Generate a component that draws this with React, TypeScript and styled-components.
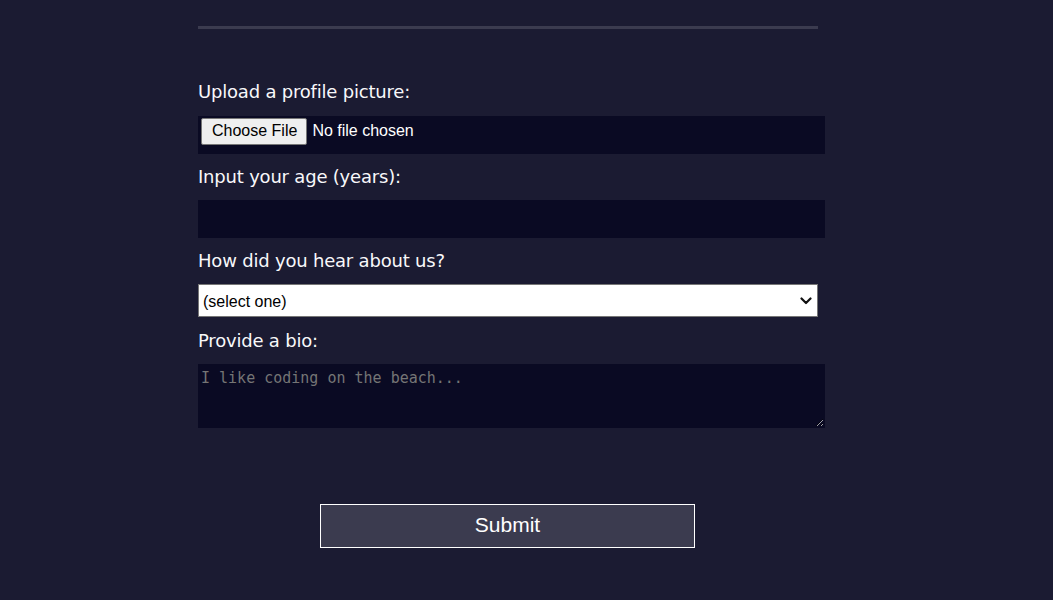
import React from "react";
import styled, { createGlobalStyle } from "styled-components";

const Global = createGlobalStyle`
  html, body {
    margin: 0;
    padding: 0;
    background: #1b1b32;
  }
  body {
    color: #f5f6f7;
    font-family: "DejaVu Sans", Verdana, sans-serif;
  }
`;

const Page = styled.main`
  min-height: 600px;
  box-sizing: border-box;
  padding: 26px 0 40px 198px;
`;

const Form = styled.form`
  width: 620px;
  display: flex;
  flex-direction: column;
`;

const Divider = styled.div`
  height: 3px;
  background: #3b3b4f;
  margin-bottom: 52px;
`;

const Field = styled.div<{ $top?: number }>`
  display: flex;
  flex-direction: column;
  align-items: flex-start;
  margin-top: ${(p) => p.$top ?? 0}px;
`;

const Label = styled.label<{ $gap?: number }>`
  display: block;
  font-size: 18px;
  line-height: 21px;
  letter-spacing: -0.2px;
  color: #f8f8fa;
  margin-bottom: ${(p) => p.$gap ?? 14}px;
`;

const DarkInput = styled.input`
  width: 627px;
  height: 38px;
  box-sizing: border-box;
  margin: 0;
  padding: 1px 2px;
  background: #0a0a23;
  border: 1px solid #0a0a23;
  color: #ffffff;
  font-family: "Liberation Sans", Arial, sans-serif;
  font-size: 16px;
  outline: none;
  &::file-selector-button {
    font-family: "Liberation Sans", Arial, sans-serif;
    font-size: 16px;
    line-height: 18px;
    padding: 3px 9px 4px 10px;
    margin: 0 5px 0 0;
    border: 1px solid #767676;
    border-radius: 2px;
    background: #efefef;
    color: #000000;
  }
`;

const SelectWrap = styled.div`
  position: relative;
  width: 620px;
`;

const Select = styled.select`
  appearance: none;
  -webkit-appearance: none;
  display: block;
  width: 620px;
  height: 33px;
  box-sizing: border-box;
  margin: 0;
  padding: 1px 30px 0 4px;
  background: #ffffff;
  color: #000000;
  border: 1px solid #767676;
  border-radius: 0;
  font-family: "Liberation Sans", Arial, sans-serif;
  font-size: 16px;
`;

const Chevron = styled.svg`
  position: absolute;
  right: 6px;
  top: 13px;
  width: 12px;
  height: 8px;
  pointer-events: none;
`;

const Bio = styled.textarea`
  width: 627px;
  height: 64px;
  box-sizing: border-box;
  margin: 0;
  padding: 4px 2px 2px;
  background: #0a0a23;
  border: 1px solid #0a0a23;
  color: #ffffff;
  font-family: "DejaVu Sans Mono", monospace;
  font-size: 15px;
  outline: none;
  &::placeholder {
    color: #757575;
  }
`;

const Submit = styled.input`
  align-self: center;
  width: 375px;
  height: 44px;
  margin: 76px 1px 0 0;
  box-sizing: border-box;
  background: #3b3b4f;
  border: 1px solid #ffffff;
  color: #ffffff;
  font-family: "Liberation Sans", Arial, sans-serif;
  font-size: 21px;
  padding: 0 0 2px;
`;

export default function App() {
  return (
    <>
      <Global />
      <Page>
        <Form onSubmit={(e) => e.preventDefault()}>
          <Divider />
          <Field>
            <Label htmlFor="profile-picture" $gap={14}>
              Upload a profile picture:
            </Label>
            <DarkInput id="profile-picture" type="file" />
          </Field>
          <Field $top={12}>
            <Label htmlFor="age" $gap={13}>
              Input your age (years):
            </Label>
            <DarkInput id="age" type="number" min={13} max={120} />
          </Field>
          <Field $top={12}>
            <Label htmlFor="referrer" $gap={13}>
              How did you hear about us?
            </Label>
            <SelectWrap>
              <Select id="referrer" defaultValue="">
                <option value="">(select one)</option>
                <option value="1">freeCodeCamp News</option>
                <option value="2">freeCodeCamp YouTube Channel</option>
                <option value="3">freeCodeCamp Forum</option>
                <option value="4">Other</option>
              </Select>
              <Chevron viewBox="0 0 12 8" aria-hidden="true">
                <path d="M1.5 1.5 L6 6 L10.5 1.5" fill="none" stroke="#111" strokeWidth="2.2" strokeLinecap="round" strokeLinejoin="round" />
              </Chevron>
            </SelectWrap>
          </Field>
          <Field $top={13}>
            <Label htmlFor="bio" $gap={13}>
              Provide a bio:
            </Label>
            <Bio id="bio" rows={3} cols={30} placeholder="I like coding on the beach..." />
          </Field>
          <Submit type="submit" value="Submit" />
        </Form>
      </Page>
    </>
  );
}
